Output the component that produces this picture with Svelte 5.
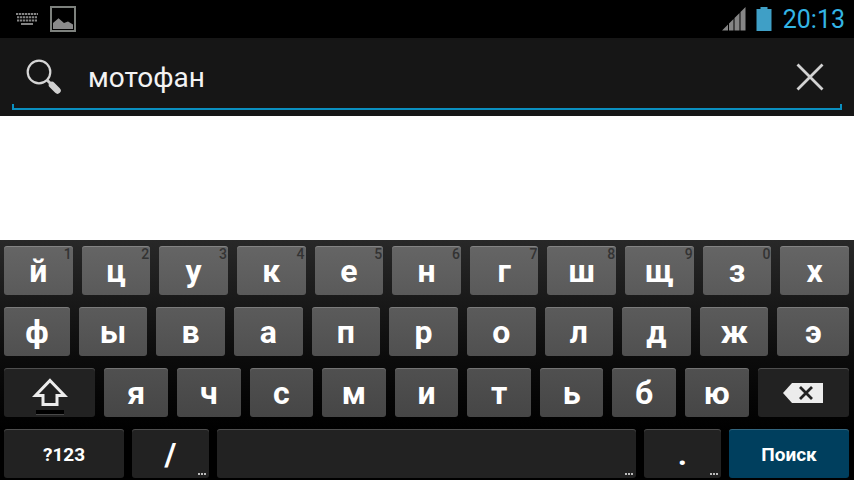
<script>
  /**
   * Search screen with a Russian on-screen keyboard
   */
  let query = $state('мотофан');

  const topRow = [...'йцукенгшщзх'];
  const hints = [...'1234567890'];
  const homeRow = [...'фывапролджэ'];
  const bottomRow = [...'ячсмитьбю'];

  function type(letter) {
    query += letter;
  }

  function erase() {
    query = query.slice(0, -1);
  }

  function clear() {
    query = '';
  }
</script>

<div class="screen">
  <header class="status">
    <svg class="ime" width="22" height="12" viewBox="0 0 22 12" aria-hidden="true">
      <g stroke="#858585" stroke-width="2" fill="none">
        <path d="M0 1H22" stroke-dasharray="2.300 .7" />
        <path d="M1 4.300H21" stroke-dasharray="2.300 .7" />
        <path d="M1 7.600H21" stroke-dasharray="2.300 .7" />
        <path d="M5 11H17" />
      </g>
    </svg>
    <svg class="picture" width="26" height="26" viewBox="0 0 26 26" aria-hidden="true">
      <rect x="1" y="1" width="24" height="24" fill="none" stroke="#7d817d" stroke-width="2" />
      <path d="M3 23V17L8.500 12.200L14 17L18 15.500L23 18.500V23Z" fill="#8a8a8a" />
    </svg>
    <span class="spacer"></span>
    <svg width="24" height="24" viewBox="0 0 24 24" aria-hidden="true">
      <path d="M0 23.500L6 17.500V23.500ZM7 23.500V16.500L11.500 12V23.500ZM12.500 23.500V11L17.500 6V23.500ZM18.500 23.500V5L23.500 0V23.500Z" fill="#858585" />
    </svg>
    <svg class="battery" width="16" height="24" viewBox="0 0 16 24" aria-hidden="true">
      <path d="M4.500 0H11.500V2H15.500V24H.5V2H4.500Z" fill="#3f9fc6" />
    </svg>
    <time>20:13</time>
  </header>

  <form class="search" onsubmit={(e) => e.preventDefault()}>
    <svg width="36" height="36" viewBox="0 0 36 36" aria-hidden="true">
      <circle cx="13" cy="13" r="11.300" fill="none" stroke="#d6d6d6" stroke-width="2.200" />
      <path d="M21 21L25 25" stroke="#d0d0d0" stroke-width="3" />
      <path d="M26 26L31.500 31.500" stroke="#d0d0d0" stroke-width="6.500" stroke-linecap="round" />
    </svg>
    <input type="text" bind:value={query} aria-label="Поиск" />
    <button type="button" class="clear" aria-label="Очистить" onclick={clear}>
      <svg width="28" height="28" viewBox="0 0 28 28" aria-hidden="true">
        <path d="M1.500 1.500L26.500 26.500M26.500 1.500L1.500 26.500" stroke="#d2d2d2" stroke-width="2.800" />
      </svg>
    </button>
    <span class="underline"></span>
  </form>

  <main class="results"></main>

  <section class="keyboard" aria-label="Клавиатура">
    <div class="row first">
      {#each topRow as letter, i}
        <button type="button" class="key" onclick={() => type(letter)}>
          {letter}
          {#if hints[i]}
            <span class="hint">{hints[i]}</span>
          {/if}
        </button>
      {/each}
    </div>

    <div class="row second">
      {#each homeRow as letter}
        <button type="button" class="key" onclick={() => type(letter)}>{letter}</button>
      {/each}
    </div>

    <div class="row third">
      <button type="button" class="key dark wide" aria-label="Shift">
        <svg class="shift" width="36" height="38" viewBox="0 0 36 38" aria-hidden="true">
          <path d="M18 2.500L32.500 17.500H25V26.500H11V17.500H3.500Z" fill="none" stroke="#ececec" stroke-width="3" />
          <rect x="4" y="32" width="28" height="4" fill="#000" />
          <rect x="4" y="36" width="28" height="1" fill="#484848" />
        </svg>
      </button>
      {#each bottomRow as letter}
        <button type="button" class="key" onclick={() => type(letter)}>{letter}</button>
      {/each}
      <button type="button" class="key dark wide" aria-label="Удалить" onclick={erase}>
        <svg width="40" height="20" viewBox="0 0 40 20" aria-hidden="true">
          <path d="M0 10L9 0H40V20H9Z" fill="#ececec" />
          <path d="M17 4L29 16M29 4L17 16" stroke="#222" stroke-width="2.800" />
        </svg>
      </button>
    </div>

    <div class="row fourth">
      <button type="button" class="key dark label symbols">?123</button>
      <button type="button" class="key dark punct" onclick={() => type('/')}>
        /
        <span class="more"></span>
      </button>
      <button type="button" class="key dark space" aria-label="Пробел" onclick={() => type(' ')}>
        <span class="more"></span>
      </button>
      <button type="button" class="key dark punct" onclick={() => type('.')}>
        .
        <span class="more"></span>
      </button>
      <button type="button" class="key label go">Поиск</button>
    </div>
  </section>
</div>

<style>
  :global(body) {
    margin: 0;
    background: #fff;
  }

  .screen {
    display: flex;
    flex-direction: column;
    min-height: 100vh;
    font-family: Roboto, 'Noto Sans', sans-serif;
  }

  .status {
    display: flex;
    align-items: center;
    height: 38px;
    padding: 0 9px 0 16px;
    background: #000;
  }

  .picture {
    margin-left: 12px;
  }

  .spacer {
    flex: 1;
  }

  .battery {
    margin: 0 11px 0 10px;
  }

  time {
    padding-top: 2px;
    color: #33b5e5;
    font-size: 25px;
    line-height: 36px;
  }

  .search {
    position: relative;
    display: flex;
    align-items: center;
    height: 78px;
    padding: 0 30px 0 26px;
    background: #161616;
  }

  .search input {
    flex: 1;
    min-width: 0;
    margin: 0 16px 0 26px;
    padding: 2px 0 0;
    border: 0;
    outline: none;
    background: transparent;
    color: #f3f3f3;
    font: 28px/40px Roboto, 'Noto Sans', sans-serif;
  }

  .underline {
    position: absolute;
    right: 12px;
    bottom: 6px;
    left: 12px;
    height: 4px;
    border: 2px solid #0a8fc0;
    border-top: 0;
    pointer-events: none;
  }

  button {
    padding: 0;
    border: 0;
    font-family: inherit;
    cursor: pointer;
  }

  .clear {
    display: flex;
    background: transparent;
  }

  .results {
    flex: 1;
    background: #fff;
  }

  .keyboard {
    display: flex;
    flex-direction: column;
    gap: 12px;
    padding: 6px 5px 2px 4px;
    background: linear-gradient(#282828, #0b0b0b 50%, #000 80%);
  }

  .row {
    display: flex;
    gap: 9px;
  }

  .key {
    position: relative;
    display: flex;
    flex: 69 1 0;
    align-items: center;
    justify-content: center;
    min-width: 0;
    height: 49px;
    border-radius: 3px;
    box-shadow: inset 0 1px rgba(255, 255, 255, 0.2);
    color: #fff;
    font-size: 32px;
    font-weight: 700;
    line-height: 48px;
  }

  .first .key {
    background: linear-gradient(#656565, #5a5a5a);
  }

  .second .key {
    background: linear-gradient(#5b5b5b, #505050);
  }

  .second .key:first-child {
    flex-grow: 66;
  }

  .second .key:last-child {
    flex-grow: 72;
  }

  .third .key {
    flex-grow: 64;
    background: linear-gradient(#505050, #464646);
  }

  .row .dark {
    background: #222;
  }

  .third .wide {
    flex-grow: 92;
  }

  .fourth {
    gap: 8px;
  }

  .fourth .symbols,
  .fourth .go {
    flex-grow: 120;
  }

  .fourth .punct {
    flex-grow: 77;
  }

  .fourth .space {
    flex-grow: 419;
  }

  .go {
    background: #003f5e;
  }

  .label {
    padding-top: 2px;
    font-size: 19px;
  }

  .shift {
    margin-top: 9px;
  }

  .hint {
    position: absolute;
    top: 0;
    right: 1px;
    color: #333;
    font-size: 14px;
    font-weight: 500;
    line-height: 16px;
  }

  .more {
    position: absolute;
    right: 3px;
    bottom: 3px;
    width: 8px;
    height: 2px;
    background: repeating-linear-gradient(90deg, #bbb 0 2px, transparent 2px 3px);
  }
</style>
